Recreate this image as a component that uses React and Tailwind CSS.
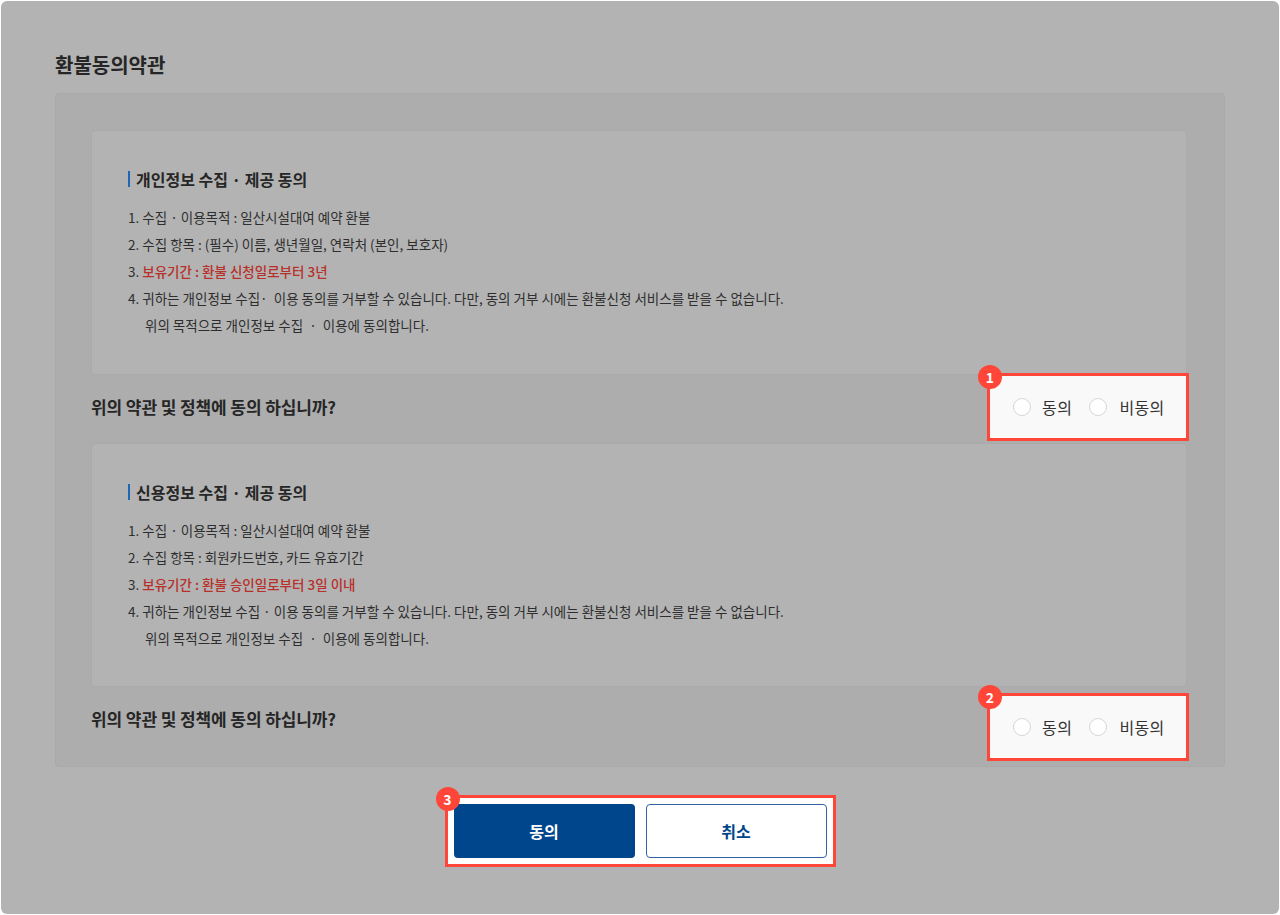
import React from "react";

const FONT = { fontFamily: '"Noto Sans CJK KR", "Noto Sans", sans-serif' };

function Badge({ n }) {
  return (
    <div className="absolute -left-3 -top-[11px] flex h-6 w-6 items-center justify-center rounded-full bg-[#ff4638] text-[14px] font-bold leading-none text-white">
      {n}
    </div>
  );
}

function RadioGroup({ n, className }) {
  return (
    <div className={"relative -mr-[2px] flex h-[68px] w-[202px] items-center border-[3px] border-[#ff4638] bg-[#f9f9f9] pl-[23px] " + className}>
      <Badge n={n} />
      <span className="h-[18px] w-[18px] shrink-0 rounded-full border border-[#d6d6d6] bg-white" />
      <span className="ml-[11px] text-[16px] leading-[24px] tracking-[0.5px] text-[#333]">동의</span>
      <span className="ml-[17px] h-[18px] w-[18px] shrink-0 rounded-full border border-[#d6d6d6] bg-white" />
      <span className="ml-[12px] text-[16px] leading-[24px] tracking-[0.3px] text-[#333]">비동의</span>
    </div>
  );
}

function Card({ title, items, className = "" }) {
  return (
    <div className={"rounded-[4px] border border-[#aaaaaa] bg-[#b3b3b3] pl-9 pt-[36px] " + className}>
      <div className="flex items-center">
        <span className="h-[16px] w-[2px] bg-[#1f66b5]" />
        <span className="ml-[6px] text-[16px] font-bold leading-[24px] text-[#262626]">{title}</span>
      </div>
      <div className="mt-[13px] text-[13.5px] leading-[27px] text-[#2e2e2e]">
        {items}
      </div>
    </div>
  );
}

export default function App() {
  return (
    <div className="min-h-[915px] w-[1280px] bg-white p-[1px]" style={FONT}>
      <div className="flex h-[913px] flex-col rounded-[6px] bg-[#b3b3b3] px-[54px] pt-[50px]">
        <h1 className="text-[20px] font-bold leading-[28px] text-[#262626]">환불동의약관</h1>

        <div className="mt-[14px] rounded-[4px] border border-[#a9a9a9] bg-[#adadad] pl-[35px] pr-[37px] pt-[36px] pb-[5px]">
          <Card
            className="pb-[35px]"
            title="개인정보 수집 · 제공 동의"
            items={
              <>
                <p>1. 수집 · 이용목적 : 일산시설대여 예약 환불</p>
                <p>2. 수집 항목 : (필수) 이름, 생년월일, 연락처 (본인, 보호자)</p>
                <p>
                  3. <span className="font-medium text-[#b8302a]">보유기간 : 환불 신청일로부터 3년</span>
                </p>
                <p className="whitespace-pre">4. 귀하는 개인정보 수집·  이용 동의를 거부할 수 있습니다. 다만, 동의 거부 시에는 환불신청 서비스를 받을 수 없습니다.</p>
                <p className="whitespace-pre pl-[17px]">위의 목적으로 개인정보 수집  ·  이용에 동의합니다.</p>
              </>
            }
          />
          <div className="flex items-start justify-between">
            <p className="pt-[20px] text-[17px] font-bold leading-[24px] tracking-[-0.1px] text-[#262626]">위의 약관 및 정책에 동의 하십니까?</p>
            <RadioGroup n={1} className="-mt-[2px] mb-[2px]" />
          </div>
          <Card
            className="pb-[34px]"
            title="신용정보 수집 · 제공 동의"
            items={
              <>
                <p>1. 수집 · 이용목적 : 일산시설대여 예약 환불</p>
                <p>2. 수집 항목 : 회원카드번호, 카드 유효기간</p>
                <p>
                  3. <span className="font-medium text-[#b8302a]">보유기간 : 환불 승인일로부터 3일 이내</span>
                </p>
                <p>4. 귀하는 개인정보 수집 · 이용 동의를 거부할 수 있습니다. 다만, 동의 거부 시에는 환불신청 서비스를 받을 수 없습니다.</p>
                <p className="whitespace-pre pl-[17px]">위의 목적으로 개인정보 수집  ·  이용에 동의합니다.</p>
              </>
            }
          />
          <div className="flex items-start justify-between">
            <p className="pt-[20px] text-[17px] font-bold leading-[24px] tracking-[-0.1px] text-[#262626]">위의 약관 및 정책에 동의 하십니까?</p>
            <RadioGroup n={2} className="mt-[6px]" />
          </div>
        </div>

        <div className="mt-[28px] flex justify-center">
          <div className="relative flex gap-[11px] border-[3px] border-[#ff4638] bg-white p-[6px]">
            <Badge n={3} />
            <button className="flex h-[54px] w-[181px] items-center justify-center rounded-[4px] bg-[#00468c] text-[16px] font-bold text-white">동의</button>
            <button className="flex h-[54px] w-[181px] items-center justify-center rounded-[4px] border border-[#2f63a3] bg-white text-[16px] font-bold text-[#00468c]">취소</button>
          </div>
        </div>
      </div>
    </div>
  );
}
